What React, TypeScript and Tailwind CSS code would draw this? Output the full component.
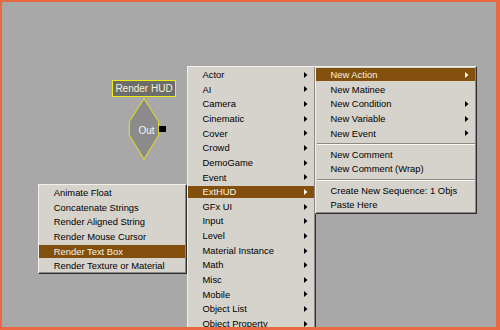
import React from "react";

type Item = { label: string; arrow?: boolean; active?: boolean } | "sep";

const FONT = { fontFamily: '"Liberation Sans", Arial, sans-serif' };

function Arrow({ light }: { light?: boolean }) {
  return (
    <svg width="4" height="6" viewBox="0 0 4 6" className="shrink-0">
      <path d="M0 0 L3.5 3 L0 6 Z" fill={light ? "#fff6e6" : "#000000"} />
    </svg>
  );
}

function Menu({ items, className }: { items: Item[]; className: string }) {
  return (
    <div
      className={`absolute flex flex-col bg-[#d6d3cc] border border-t-[#f2f0ea] border-l-[#f2f0ea] border-r-[#2e2e2e] border-b-[#2e2e2e] shadow-[inset_-1px_-1px_0_#8c8984] ${className}`}
      style={FONT}
    >
      {items.map((it, i) =>
        it === "sep" ? (
          <div key={i} className="h-[6.5px] flex flex-col justify-center px-[1px] shrink-0">
            <div className="h-px bg-[#8c8984]" />
            <div className="h-px bg-[#fbfaf7]" />
          </div>
        ) : (
          <div key={i} className="h-[14.67px] py-[1px] pr-[1px] shrink-0">
            <div
              className={`h-full flex items-center justify-between pl-[14.5px] pr-[6px] ${
                it.active ? "bg-[#82500c] text-[#fbf3e4]" : "text-black"
              }`}
            >
              <span className="text-[9.4px] leading-none whitespace-nowrap">{it.label}</span>
              {it.arrow && <Arrow light={it.active} />}
            </div>
          </div>
        )
      )}
    </div>
  );
}

const mainItems: Item[] = [
  { label: "Actor", arrow: true },
  { label: "AI", arrow: true },
  { label: "Camera", arrow: true },
  { label: "Cinematic", arrow: true },
  { label: "Cover", arrow: true },
  { label: "Crowd", arrow: true },
  { label: "DemoGame", arrow: true },
  { label: "Event", arrow: true },
  { label: "ExtHUD", arrow: true, active: true },
  { label: "GFx UI", arrow: true },
  { label: "Input", arrow: true },
  { label: "Level", arrow: true },
  { label: "Material Instance", arrow: true },
  { label: "Math", arrow: true },
  { label: "Misc", arrow: true },
  { label: "Mobile", arrow: true },
  { label: "Object List", arrow: true },
  { label: "Object Property", arrow: true },
  { label: "Particles", arrow: true },
];

const rightItems: Item[] = [
  { label: "New Action", arrow: true, active: true },
  { label: "New Matinee" },
  { label: "New Condition", arrow: true },
  { label: "New Variable", arrow: true },
  { label: "New Event", arrow: true },
  "sep",
  { label: "New Comment" },
  { label: "New Comment (Wrap)" },
  "sep",
  { label: "Create New Sequence: 1 Objs" },
  { label: "Paste Here" },
];

const leftItems: Item[] = [
  { label: "Animate Float" },
  { label: "Concatenate Strings" },
  { label: "Render Aligned String" },
  { label: "Render Mouse Cursor" },
  { label: "Render Text Box", active: true },
  { label: "Render Texture or Material" },
];

export default function App() {
  return (
    <div className="w-[500px] h-[330px] bg-[#e9683f] pl-[2px] pt-[2px] pr-[4px] pb-[3px]">
      <div className="relative w-full h-full bg-[#a8a8a8] overflow-hidden" style={FONT}>
        {/* Node label */}
        <div className="absolute left-[110px] top-[78px] w-[64px] h-[17px] border border-[#eeee10] bg-[#6c6c6c] flex items-center justify-center">
          <span className="text-[10px] leading-none text-[#f6f4d6] whitespace-nowrap">Render HUD</span>
        </div>
        {/* Node body */}
        <svg className="absolute left-[125px] top-[94px]" width="36" height="68" viewBox="0 0 36 68">
          <polygon
            points="17,2.7 31.7,25.7 31.7,39 17,63.3 2.3,39 2.3,25.7"
            fill="#8b8b8b"
            stroke="#e8e614"
            strokeWidth="1"
          />
        </svg>
        <span className="absolute left-[136.5px] top-[122px] text-[10px] leading-[14px] text-[#f4f4f4] whitespace-nowrap">
          Out
        </span>
        <div className="absolute left-[157px] top-[124px] w-[7px] h-[6px] bg-black" />

        <Menu items={mainItems} className="left-[185px] top-[64px] w-[129px] pt-[0.3px]" />
        <Menu items={leftItems} className="left-[36.3px] top-[182.3px] w-[148.7px] h-[90px]" />
        <Menu items={rightItems} className="left-[313px] top-[64px] w-[162px] h-[148px] pt-[0.3px]" />
      </div>
    </div>
  );
}
